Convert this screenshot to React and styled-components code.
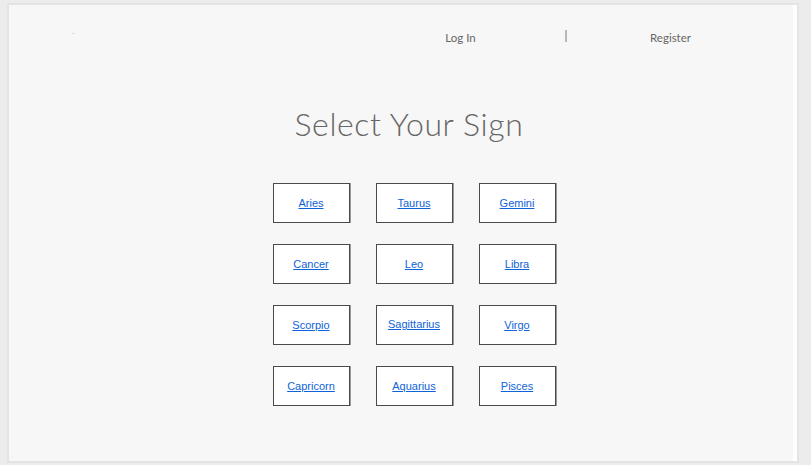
import React from 'react';
import styled, { createGlobalStyle } from 'styled-components';

const GlobalStyle = createGlobalStyle`
  html, body {
    margin: 0;
    padding: 0;
    background-color: #ececec;
  }
  body {
    padding: 3px 12px 2px 7px;
    font-family: Lato, 'Open Sans', sans-serif;
  }
`;

const Page = styled.div`
  height: 456px;
  background-color: #f7f7f7;
  border: 2px solid #e4e4e4;
  box-shadow: inset -4px 0 0 #ffffff;
  display: flex;
  flex-direction: column;
  align-items: center;
`;

const Header = styled.header`
  align-self: stretch;
  display: flex;
  align-items: center;
  height: 64px;
  padding-left: 63px;
`;

const Logo = styled.div`
  width: 2px;
  height: 1px;
  background-color: #d8d8d8;
  margin-top: -8px;
`;

const Nav = styled.nav`
  display: grid;
  grid-template-columns: repeat(3, 105px);
  margin-left: 334px;
  align-items: center;
`;

const NavLink = styled.a`
  text-align: center;
  font-family: Lato, sans-serif;
  font-size: 11.5px;
  color: #666;
  text-decoration: none;
`;

const Divider = styled.span`
  justify-self: center;
  width: 2px;
  height: 12px;
  margin-top: -3px;
  background-color: #b8b8b8;
`;

const Title = styled.h1`
  margin: 35px 0 0 12px;
  font-family: Lato, sans-serif;
  font-weight: 300;
  font-size: 32px;
  letter-spacing: 0.6px;
  color: #666;
`;

const SignGrid = styled.div`
  display: grid;
  grid-template-columns: repeat(3, 77px);
  grid-auto-rows: 40px;
  column-gap: 26px;
  row-gap: 21px;
  margin: 40px 0 0 22px;
`;

const SignBox = styled.div`
  box-sizing: border-box;
  background-color: #fff;
  border: 1px solid #4a4a4a;
  box-shadow: 1px 0 0 #9a9a9a;
  display: flex;
  align-items: center;
  justify-content: center;
`;

const SignLink = styled.a`
  font-family: 'Liberation Sans', Arial, sans-serif;
  font-size: 11px;
  color: #0f63d8;
  text-decoration: underline;
  margin-top: ${(props) => (props.$raised ? '-2px' : '0')};
`;

const signs = [
  'Aries', 'Taurus', 'Gemini',
  'Cancer', 'Leo', 'Libra',
  'Scorpio', 'Sagittarius', 'Virgo',
  'Capricorn', 'Aquarius', 'Pisces',
];

const App = () => (
  <>
    <GlobalStyle />
    <Page>
      <Header>
        <Logo />
        <Nav>
          <NavLink href="#">Log In</NavLink>
          <Divider />
          <NavLink href="#">Register</NavLink>
        </Nav>
      </Header>
      <Title>Select Your Sign</Title>
      <SignGrid>
        {signs.map((sign) => (
          <SignBox key={sign}>
            <SignLink href="#" $raised={sign === 'Sagittarius'}>{sign}</SignLink>
          </SignBox>
        ))}
      </SignGrid>
    </Page>
  </>
);

export default App;
